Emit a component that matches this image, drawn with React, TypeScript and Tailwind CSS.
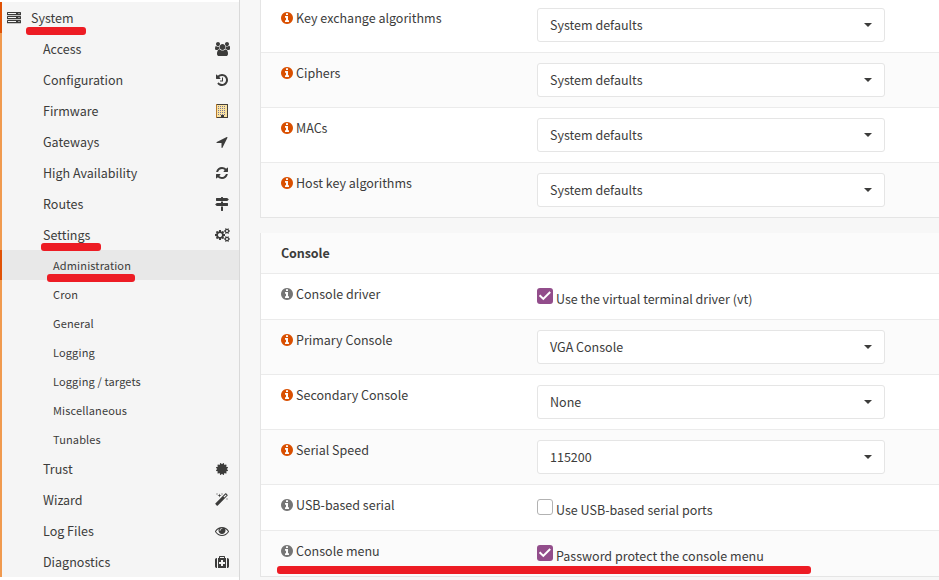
import type { ReactNode } from "react";

const FONT = "font-['Noto_Sans_CJK_SC','Noto_Sans',sans-serif]";

const P = {
  users:
    "M593 896q-162 5-265 128h-134q-82 0-138-40.5t-56-118.5q0-353 124-353 6 0 43.5 21t97.5 42.5 119 21.5q67 0 133-23-5 37-5 66 0 159 93 293zm1071 637q0 120-73 189.5t-194 69.5h-874q-121 0-194-69.5t-73-189.5q0-53 3.5-103.5t14-109 26.5-108.5 43-97.5 62-81 85.5-53.5 111.5-20q10 0 43 21.5t73 48 107 48 135 21.5 135-21.5 107-48 73-48 43-21.5q61 0 111.5 20t85.5 53.5 62 81 43 97.5 26.5 108.5 14 109 3.5 103.5zm-1024-1277q0 106-75 181t-181 75-181-75-75-181 75-181 181-75 181 75 75 181zm704 384q0 159-112.5 271.5t-271.5 112.5-271.5-112.5-112.5-271.5 112.5-271.5 271.5-112.5 271.5 112.5 112.5 271.5zm576 225q0 78-56 118.5t-138 40.5h-134q-103-123-265-128 93-134 93-293 0-29-5-66 66 23 133 23 59 0 119-21.5t97.5-42.5 43.5-21q124 0 124 353zm-128-609q0 106-75 181t-181 75-181-75-75-181 75-181 181-75 181 75 75 181z",
  history:
    "M1664 896q0 156-61 298t-164 245-245 164-298 61q-172 0-327-72.5t-264-204.5q-7-10-6.5-22.5t8.5-20.5l137-138q10-9 25-9 16 2 23 12 73 95 179 147t225 52q104 0 198.5-40.5t163.5-109.5 109.5-163.5 40.5-198.5-40.5-198.5-109.5-163.5-163.5-109.5-198.5-40.5q-98 0-188 35.5t-160 101.5l137 138q31 30 14 69-17 40-59 40h-448q-26 0-45-19t-19-45v-448q0-42 40-59 39-17 69 14l130 129q107-101 244.5-156.5t284.5-55.5q156 0 298 61t245 164 164 245 61 298zm-640-288v448q0 14-9 23t-23 9h-320q-14 0-23-9t-9-23v-64q0-14 9-23t23-9h224v-352q0-14 9-23t23-9h64q14 0 23 9t9 23z",
  arrow:
    "M1593 349l-640 1280q-17 35-57 35-5 0-15-2-22-5-35.5-22.5t-13.5-39.5v-576h-576q-22 0-39.5-13.5t-22.5-35.5 4-42 29-30l1280-640q13-7 29-7 27 0 45 19 15 14 18.5 34.5t-6.5 39.5z",
  refresh:
    "M1639 1056q0 5-1 7-64 268-268 434.5t-478 166.5q-146 0-282.5-55t-243.5-157l-129 129q-19 19-45 19t-45-19-19-45v-448q0-26 19-45t45-19h448q26 0 45 19t19 45-19 45l-137 137q71 66 161 102t187 36q134 0 250-65t186-179q11-17 53-117 8-23 30-23h192q13 0 22.5 9.5t9.5 22.5zm25-800v448q0 26-19 45t-45 19h-448q-26 0-45-19t-19-45 19-45l138-138q-148-137-349-137-134 0-250 65t-186 179q-11 17-53 117-8 23-30 23h-199q-13 0-22.5-9.5t-9.5-22.5v-7q65-268 270-434.5t480-166.5q146 0 284 55.5t245 156.5l130-129q19-19 45-19t45 19 19 45z",
  signs:
    "M1745 297q10 10 10 23t-10 23l-141 141q-28 28-68 28h-1344q-26 0-45-19t-19-45v-256q0-26 19-45t45-19h576v-64q0-26 19-45t45-19h128q26 0 45 19t19 45v64h512q40 0 68 28zm-977 919h256v512q0 26-19 45t-45 19h-128q-26 0-45-19t-19-45v-512zm832-448q26 0 45 19t19 45v256q0 26-19 45t-45 19h-1344q-40 0-68-28l-141-141q-10-10-10-23t10-23l141-141q28-28 68-28h512v-192h256v192h576z",
  cogs:
    "M896 896q0-106-75-181t-181-75-181 75-75 181 75 181 181 75 181-75 75-181zm768 512q0-52-38-90t-90-38-90 38-38 90q0 53 37.5 90.5t90.5 37.5 90.5-37.5 37.5-90.5zm0-1024q0-52-38-90t-90-38-90 38-38 90q0 53 37.5 90.5t90.5 37.5 90.5-37.5 37.5-90.5zm-384 421v185q0 10-7 19.5t-16 10.5l-155 24q-11 35-32 76 34 48 90 115 7 11 7 20 0 12-7 19-23 30-82.5 89.5t-78.5 59.5q-11 0-21-7l-115-90q-37 19-77 31-11 108-23 155-7 24-30 24h-186q-11 0-20-7.5t-10-17.5l-23-153q-34-10-75-31l-118 89q-7 7-20 7-11 0-21-8-144-133-144-160 0-9 7-19 10-14 41-53t47-61q-23-44-35-82l-152-24q-10-1-17-9.5t-7-19.5v-185q0-10 7-19.5t16-10.5l155-24q11-35 32-76-34-48-90-115-7-11-7-20 0-12 7-20 22-30 82-89t79-59q11 0 21 7l115 90q34-18 77-32 11-108 23-154 7-24 30-24h186q11 0 20 7.5t10 17.5l23 153q34 10 75 31l118-89q8-7 20-7 11 0 21 8 144 133 144 160 0 8-7 19-12 16-42 54t-45 60q23 48 34 82l152 23q10 2 17 10.5t7 19.5zm640 533v140q0 16-149 31-12 27-30 52 51 113 51 138 0 4-4 7-122 71-124 71-8 0-46-47t-52-68q-20 2-30 2t-30-2q-14 21-52 68t-46 47q-2 0-124-71-4-3-4-7 0-25 51-138-18-25-30-52-149-15-149-31v-140q0-16 149-31 13-29 30-52-51-113-51-138 0-4 4-7 4-2 35-20t59-34 30-16q8 0 46 46.5t52 67.5q20-2 30-2t30 2q51-71 92-112l6-2q4 0 124 70 4 3 4 7 0 25-51 138 17 23 30 52 149 15 149 31zm0-1024v140q0 16-149 31-12 27-30 52 51 113 51 138 0 4-4 7-122 71-124 71-8 0-46-47t-52-68q-20 2-30 2t-30-2q-14 21-52 68t-46 47q-2 0-124-71-4-3-4-7 0-25 51-138-18-25-30-52-149-15-149-31v-140q0-16 149-31 13-29 30-52-51-113-51-138 0-4 4-7 4-2 35-20t59-34 30-16q8 0 46 46.5t52 67.5q20-2 30-2t30 2q51-71 92-112l6-2q4 0 124 70 4 3 4 7 0 25-51 138 17 23 30 52 149 15 149 31z",
  certificate:
    "M1504 896l138 135q30 28 20 70-12 41-52 51l-188 48 53 186q12 41-19 70-29 31-70 19l-186-53-48 188q-10 40-51 52-12 2-19 2-31 0-51-22l-135-138-135 138q-28 30-70 20-41-11-51-52l-48-188-186 53q-41 12-70-19-31-29-19-70l53-186-188-48q-40-10-52-51-10-42 20-70l138-135-138-135q-30-28-20-70 12-41 52-51l188-48-53-186q-12-41 19-70 29-31 70-19l186 53 48-188q10-41 51-51 41-12 70 19l135 139 135-139q29-30 70-19 41 10 51 51l48 188 186-53q41-12 70 19 31 29 19 70l-53 186 188 48q40 10 52 51 10 42-20 70z",
  magic:
    "M1190 581l293-293-107-107-293 293zm447-293q0 27-18 45l-1286 1286q-18 18-45 18t-45-18l-198-198q-18-18-18-45t18-45l1286-1286q18-18 45-18t45 18l198 198q18 18 18 45zm-1351-190l98 30-98 30-30 98-30-98-98-30 98-30 30-98zm350 162l196 60-196 60-60 196-60-196-196-60 196-60 60-196zm930 478l98 30-98 30-30 98-30-98-98-30 98-30 30-98zm-640-640l98 30-98 30-30 98-30-98-98-30 98-30 30-98z",
  eye:
    "M1664 960q-152-236-381-353 61 104 61 225 0 185-131.5 316.5t-316.5 131.5-316.5-131.5-131.5-316.5q0-121 61-225-229 117-381 353 133 205 333.5 326.5t434.5 121.5 434.5-121.5 333.5-326.5zm-720-384q0-20-14-34t-34-14q-125 0-214.5 89.5t-89.5 214.5q0 20 14 34t34 14 34-14 14-34q0-86 61-147t147-61q20 0 34-14t14-34zm848 384q0 34-20 69-140 230-376.5 368.5t-499.5 138.5-499.5-139-376.5-368q-20-35-20-69t20-69q140-229 376.5-368t499.5-139 499.5 139 376.5 368q20 35 20 69z",
  medkit:
    "M1280 1120v-192q0-14-9-23t-23-9h-224v-224q0-14-9-23t-23-9h-192q-14 0-23 9t-9 23v224h-224q-14 0-23 9t-9 23v192q0 14 9 23t23 9h224v224q0 14 9 23t23 9h192q14 0 23-9t9-23v-224h224q14 0 23-9t9-23zm-640-736h512v-128h-512v128zm-384 0v1280h-32q-92 0-158-66t-66-158v-832q0-92 66-158t158-66h32zm1152 0v1280h-1024v-1280h128v-160q0-40 28-68t68-28h576q40 0 68 28t28 68v160h128zm384 224v832q0 92-66 158t-158 66h-32v-1280h32q92 0 158 66t66 158z",
  info:
    "M1152 1376v-160q0-14-9-23t-23-9h-96v-512q0-14-9-23t-23-9h-320q-14 0-23 9t-9 23v160q0 14 9 23t23 9h96v320h-96q-14 0-23 9t-9 23v160q0 14 9 23t23 9h448q14 0 23-9t9-23zm-128-896v-160q0-14-9-23t-23-9h-192q-14 0-23 9t-9 23v160q0 14 9 23t23 9h192q14 0 23-9t9-23zm640 416q0 209-103 385.5t-279.5 279.5-385.5 103-385.5-103-279.5-279.5-103-385.5 103-385.5 279.5-279.5 385.5-103 385.5 103 279.5 279.5 103 385.5z",
};

function Icon({ d, wide }: { d: string; wide?: boolean }) {
  return (
    <svg
      viewBox={wide ? "0 0 1920 1792" : "0 0 1792 1792"}
      className={wide ? "h-[14px] w-[15px]" : "h-[14px] w-[14px]"}
      fill="currentColor"
      fillRule="evenodd"
    >
      <path d={d} />
    </svg>
  );
}

function Building() {
  const rows = [2, 4, 6, 8, 10];
  return (
    <svg viewBox="0 0 12 14" className="h-[14px] w-3" shapeRendering="crispEdges">
      <rect x="0.5" y="0.5" width="11" height="13" fill="#fce3a0" stroke="#46403a" />
      <path d="M0.5 0v14" stroke="#b5792c" />
      {rows.map((y) => (
        <path key={y} d={`M2 ${y + 0.5}h8`} stroke="#77779a" strokeDasharray="1 1" />
      ))}
      <path d="M5 11h3v2h-3z" fill="#3c3c3b" />
    </svg>
  );
}

function Server() {
  return (
    <svg viewBox="0 0 14 12" className="h-3 w-[14px]" fill="#3c3c3b">
      {[0, 4, 8].map((y) => (
        <g key={y}>
          <rect x="0" y={y} width="14" height="3.2" rx="0.5" />
          <rect x="1" y={y + 1} width="8" height="1" fill="#f5f5f5" />
          <rect x="11.5" y={y + 1} width="1" height="1" fill="#f5f5f5" />
        </g>
      ))}
    </svg>
  );
}

const top: [string, ReactNode][] = [
  ["Access", <Icon d={P.users} wide />],
  ["Configuration", <Icon d={P.history} />],
  ["Firmware", <Building />],
  ["Gateways", <Icon d={P.arrow} />],
  ["High Availability", <Icon d={P.refresh} />],
  ["Routes", <Icon d={P.signs} />],
  ["Settings", <Icon d={P.cogs} wide />],
];
const sub = ["Administration", "Cron", "General", "Logging", "Logging / targets", "Miscellaneous", "Tunables"];
const bottom: [string, ReactNode][] = [
  ["Trust", <Icon d={P.certificate} />],
  ["Wizard", <Icon d={P.magic} />],
  ["Log Files", <Icon d={P.eye} />],
  ["Diagnostics", <Icon d={P.medkit} />],
];

function MenuItem({ label, icon }: { label: string; icon: ReactNode }) {
  return (
    <div className="flex h-[31px] items-center justify-between border-l-2 border-[#f09a4f] pl-[41px] pr-[9px]">
      <span>{label}</span>
      <span className="flex w-4 justify-center">{icon}</span>
    </div>
  );
}

function Mark({ className }: { className: string }) {
  return <div className={`absolute rounded-[3px] bg-[#ed1c24] ${className}`} />;
}

function Label({ text, gray }: { text: string; gray?: boolean }) {
  return (
    <div className="flex h-5 w-[257px] shrink-0 items-center gap-[2px]">
      <span className={gray ? "text-[#757575]" : "text-[#d94f00]"}>
        <Icon d={P.info} />
      </span>
      <span>{text}</span>
    </div>
  );
}

function SelectRow({ label, value, shade }: { label: string; value: string; shade?: boolean }) {
  return (
    <div className={`flex h-[55px] border-t border-[#ebebeb] pl-[19px] pt-[10px] ${shade ? "bg-[#fbfbfb]" : "bg-white"}`}>
      <Label text={label} />
      <div className="flex h-[34px] w-[348px] items-center justify-between rounded-[3px] border border-[#e5e5e5] bg-white px-3">
        <span>{value}</span>
        <span className="h-0 w-0 border-x-4 border-t-4 border-x-transparent border-t-[#3c3c3b]" />
      </div>
    </div>
  );
}

function CheckRow({ label, text, checked, shade }: { label: string; text: string; checked?: boolean; shade?: boolean }) {
  return (
    <div className={`flex h-[46px] border-t border-[#ebebeb] pl-[19px] pt-[10px] ${shade ? "bg-[#fbfbfb]" : "bg-white"}`}>
      <Label text={label} gray />
      <div className="flex h-6 gap-[3px] pt-1">
        {checked ? (
          <span className="flex h-4 w-4 items-center justify-center rounded-[3px] bg-[#924d8b]">
            <svg viewBox="0 0 16 16" className="h-4 w-4" fill="none" stroke="white" strokeWidth="2">
              <path d="M2.6 7.2L6.3 10.9L13.2 4" />
            </svg>
          </span>
        ) : (
          <span className="h-4 w-4 rounded-[3px] border border-[#b2b2b2] bg-white" />
        )}
        <span className="pt-px leading-5">{text}</span>
      </div>
    </div>
  );
}

export default function App() {
  return (
    <div className={`relative flex h-[580px] w-[939px] overflow-hidden bg-[#f7f7f7] text-[12.53px] leading-5 text-[#3c3c3b] ${FONT}`}>
      <nav className="h-full w-60 shrink-0 border-r border-[#d9d9d9] bg-white pt-[2px]">
        <div className="h-[575px] bg-[#f5f5f5]">
          <div className="flex h-[31px] items-center border-l-2 border-[#e05206] pl-[5px]">
            <Server />
            <span className="ml-[10px]">System</span>
          </div>
          {top.map(([l, i]) => (
            <MenuItem key={l} label={l} icon={i} />
          ))}
          <div className="text-[11px] tracking-[0.14px]">
            {sub.map((s, i) => (
              <div
                key={s}
                className={
                  i === 0
                    ? "relative -mb-px flex h-[30px] items-center border-l-2 border-[#e05206] bg-[#e8e8e8] pl-[51px]"
                    : "flex h-[29px] items-center border-l-2 border-[#f09a4f] pl-[51px]"
                }
              >
                {s}
              </div>
            ))}
          </div>
          {bottom.map(([l, i]) => (
            <MenuItem key={l} label={l} icon={i} />
          ))}
        </div>
      </nav>
      <main className="ml-5 flex flex-1 flex-col">
        <section className="-mt-[3px] border-b border-l border-[#e5e5e5]">
          <SelectRow label="Key exchange algorithms" value="System defaults" />
          <SelectRow label="Ciphers" value="System defaults" shade />
          <SelectRow label="MACs" value="System defaults" />
          <SelectRow label="Host key algorithms" value="System defaults" shade />
        </section>
        <section className="mt-[15px] border-b border-l border-[#e5e5e5]">
          <div className="flex h-10 items-center bg-[#fbfbfb] pl-5 font-bold tracking-[-0.1px]">Console</div>
          <CheckRow label="Console driver" text="Use the virtual terminal driver (vt)" checked />
          <SelectRow label="Primary Console" value="VGA Console" shade />
          <SelectRow label="Secondary Console" value="None" />
          <SelectRow label="Serial Speed" value="115200" shade />
          <CheckRow label="USB-based serial" text="Use USB-based serial ports" />
          <CheckRow label="Console menu" text="Password protect the console menu" checked shade />
        </section>
      </main>
      <Mark className="left-[26px] top-[27px] h-2 w-[60px]" />
      <Mark className="left-[41px] top-[243px] h-2 w-[60px]" />
      <Mark className="left-[47px] top-[274px] h-2 w-[88px]" />
      <Mark className="left-[277px] top-[566px] h-2 w-[534px]" />
    </div>
  );
}
